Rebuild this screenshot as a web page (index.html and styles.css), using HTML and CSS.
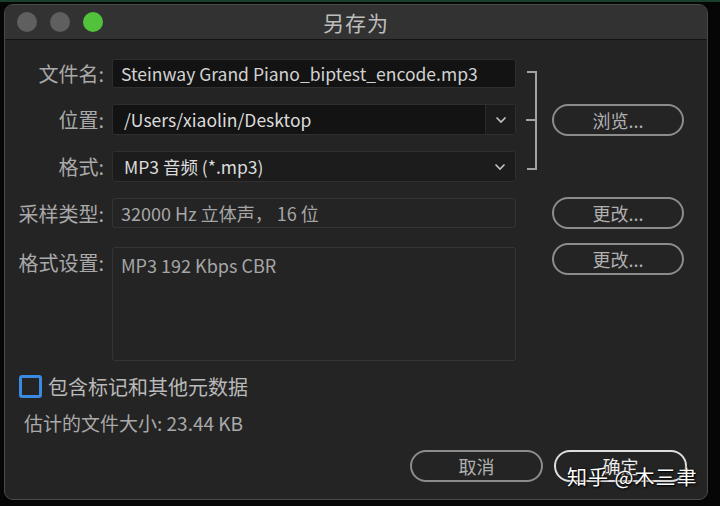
FILE: index.html
```html
<!DOCTYPE html>
<html>
<head>
<title>另存为</title>
<meta charset="utf-8">
<link rel="stylesheet" href="styles.css">
</head>
<body>
<div class="window">
  <div class="titlebar">
    <div class="lights">
      <span class="light"></span><span class="light"></span><span class="light green"></span>
    </div>
    <div class="title">另存为</div>
    <div></div>
  </div>

  <div class="content">
    <div class="form">
      <label class="lbl row1">文件名:</label>
      <div class="field input row1">Steinway Grand Piano_biptest_encode.mp3</div>
      <div class="bracket"></div>

      <label class="lbl row2">位置:</label>
      <div class="field input split row2">
        <span class="value bright">/Users/xiaolin/Desktop</span>
        <span class="caret"><svg width="12" height="8" viewBox="0 0 12 8"><path d="M1.5 1.5 L6 6 L10.5 1.5" fill="none" stroke="#c4c4c4" stroke-width="1.6"/></svg></span>
      </div>
      <button class="btn row2">浏览...</button>

      <label class="lbl row3">格式:</label>
      <div class="field select row3">
        <span class="value bright">MP3 音频 (*.mp3)</span>
        <span class="caret"><svg width="12" height="8" viewBox="0 0 12 8"><path d="M1.5 1.5 L6 6 L10.5 1.5" fill="none" stroke="#c4c4c4" stroke-width="1.6"/></svg></span>
      </div>

      <label class="lbl row4">采样类型:</label>
      <div class="field readonly row4">32000 Hz 立体声，&nbsp;16 位</div>
      <button class="btn row4">更改...</button>

      <label class="lbl row5 top">格式设置:</label>
      <div class="field readonly area row5">MP3 192 Kbps CBR</div>
      <button class="btn row5 top">更改...</button>
    </div>

    <label class="check">
      <span class="box"></span>
      包含标记和其他元数据
    </label>
    <div class="estimate">估计的文件大小: 23.44 KB</div>

    <div class="actions">
      <button class="btn">取消</button>
      <button class="btn primary">确定</button>
    </div>
  </div>

  <div class="watermark">知乎 @木三聿</div>
</div>
</body>
</html>
```

FILE: styles.css
```css
* { box-sizing: border-box; }
body { margin: 0; padding: 2px 12px 6px 4px; background: #060606; font-family: "Noto Sans CJK SC", "Noto Sans", sans-serif; color: #b4b4b4; height: 506px; overflow: hidden; border-top: 2px solid #1c3f2d; }

.window { position: relative; width: 704px; height: 496px; background: #242424; border: 1px solid #4a4a4a; border-radius: 9px; overflow: hidden; display: flex; flex-direction: column; }

.titlebar { height: 35px; background: #323232; border-bottom: 1px solid #141414; display: grid; grid-template-columns: 1fr auto 1fr; align-items: center; }
.lights { display: flex; gap: 13px; padding-left: 12px; }
.light { width: 20px; height: 20px; border-radius: 50%; background: #5f5f5f; }
.light.green { background: #52c23d; }
.title { font-size: 21px; color: #bdbdbd; letter-spacing: 1px; }

.content { padding: 19px 0 0 0; display: flex; flex-direction: column; }

.form { display: grid; grid-template-columns: 100px 411px 36px 132px; grid-template-rows: 29px 31px 31px 30px 117px; row-gap: 16px; }
.row1 { grid-row: 1; }
.row2 { grid-row: 2; }
.row3 { grid-row: 3; }
.row4 { grid-row: 4; }
.row5 { grid-row: 5; margin-top: 3px; }

.lbl { grid-column: 1; align-self: center; text-align: right; padding-right: 1px; font-size: 20px; color: #a9a9a9; white-space: nowrap; }
.lbl.top { align-self: start; margin-top: 4px; }

.field { grid-column: 2; margin-left: 7px; border: 1px solid #2f2f2f; border-radius: 3px; font-size: 17.5px; display: flex; align-items: center; padding-left: 8px; white-space: nowrap; }
.input { background: #131313; color: #d2d2d2; }
.select { background: #1c1c1c; padding-right: 0; justify-content: space-between; padding-left: 11px; }
.split { padding-left: 11px; padding-right: 0; justify-content: space-between; }
.value.bright { color: #dcdcdc; }
.caret { width: 30px; height: 100%; display: flex; align-items: center; justify-content: center; }
.split .caret { background: #1c1c1c; border-left: 1px solid #2a2a2a; }
.readonly { background: #242424; border-color: #353535; color: #a6a6a6; font-size: 18px; }
.area { align-items: flex-start; padding-top: 4px; }

.bracket { grid-column: 3; grid-row: 1 / 4; position: relative; margin: 12px 0 12px 11px; width: 10px; border: 2px solid #a2a2a2; border-left: none; }
.bracket::after { content: ''; position: absolute; left: -1px; right: 0; top: 50%; margin-top: -2px; border-top: 2px solid #a2a2a2; }

.btn { grid-column: 4; align-self: center; height: 32px; border: 2px solid #8c8c8c; border-radius: 16px; background: transparent; color: #b0b0b0; font-family: inherit; font-size: 18px; padding: 0; cursor: pointer; }
.btn.top { align-self: start; margin-top: -1px; }

.check { display: flex; align-items: center; gap: 6px; margin: 11px 0 0 14px; font-size: 20px; color: #b9b9b9; }
.box { width: 23px; height: 23px; border: 3px solid #3a8ae2; border-radius: 3px; }
.estimate { margin: 8px 0 0 19px; font-size: 19px; color: #a9a9a9; }

.actions { display: flex; justify-content: flex-end; gap: 11px; padding-right: 20px; margin-top: 14px; }
.actions .btn { width: 133px; }
.actions .btn.primary { border-color: #dedede; color: #ececec; }

.watermark { position: absolute; left: 562px; top: 457px; font-size: 20px; color: #ffffff; letter-spacing: 1px; text-shadow: 0 0 2px #000, 1px 1px 2px #000; }
```
